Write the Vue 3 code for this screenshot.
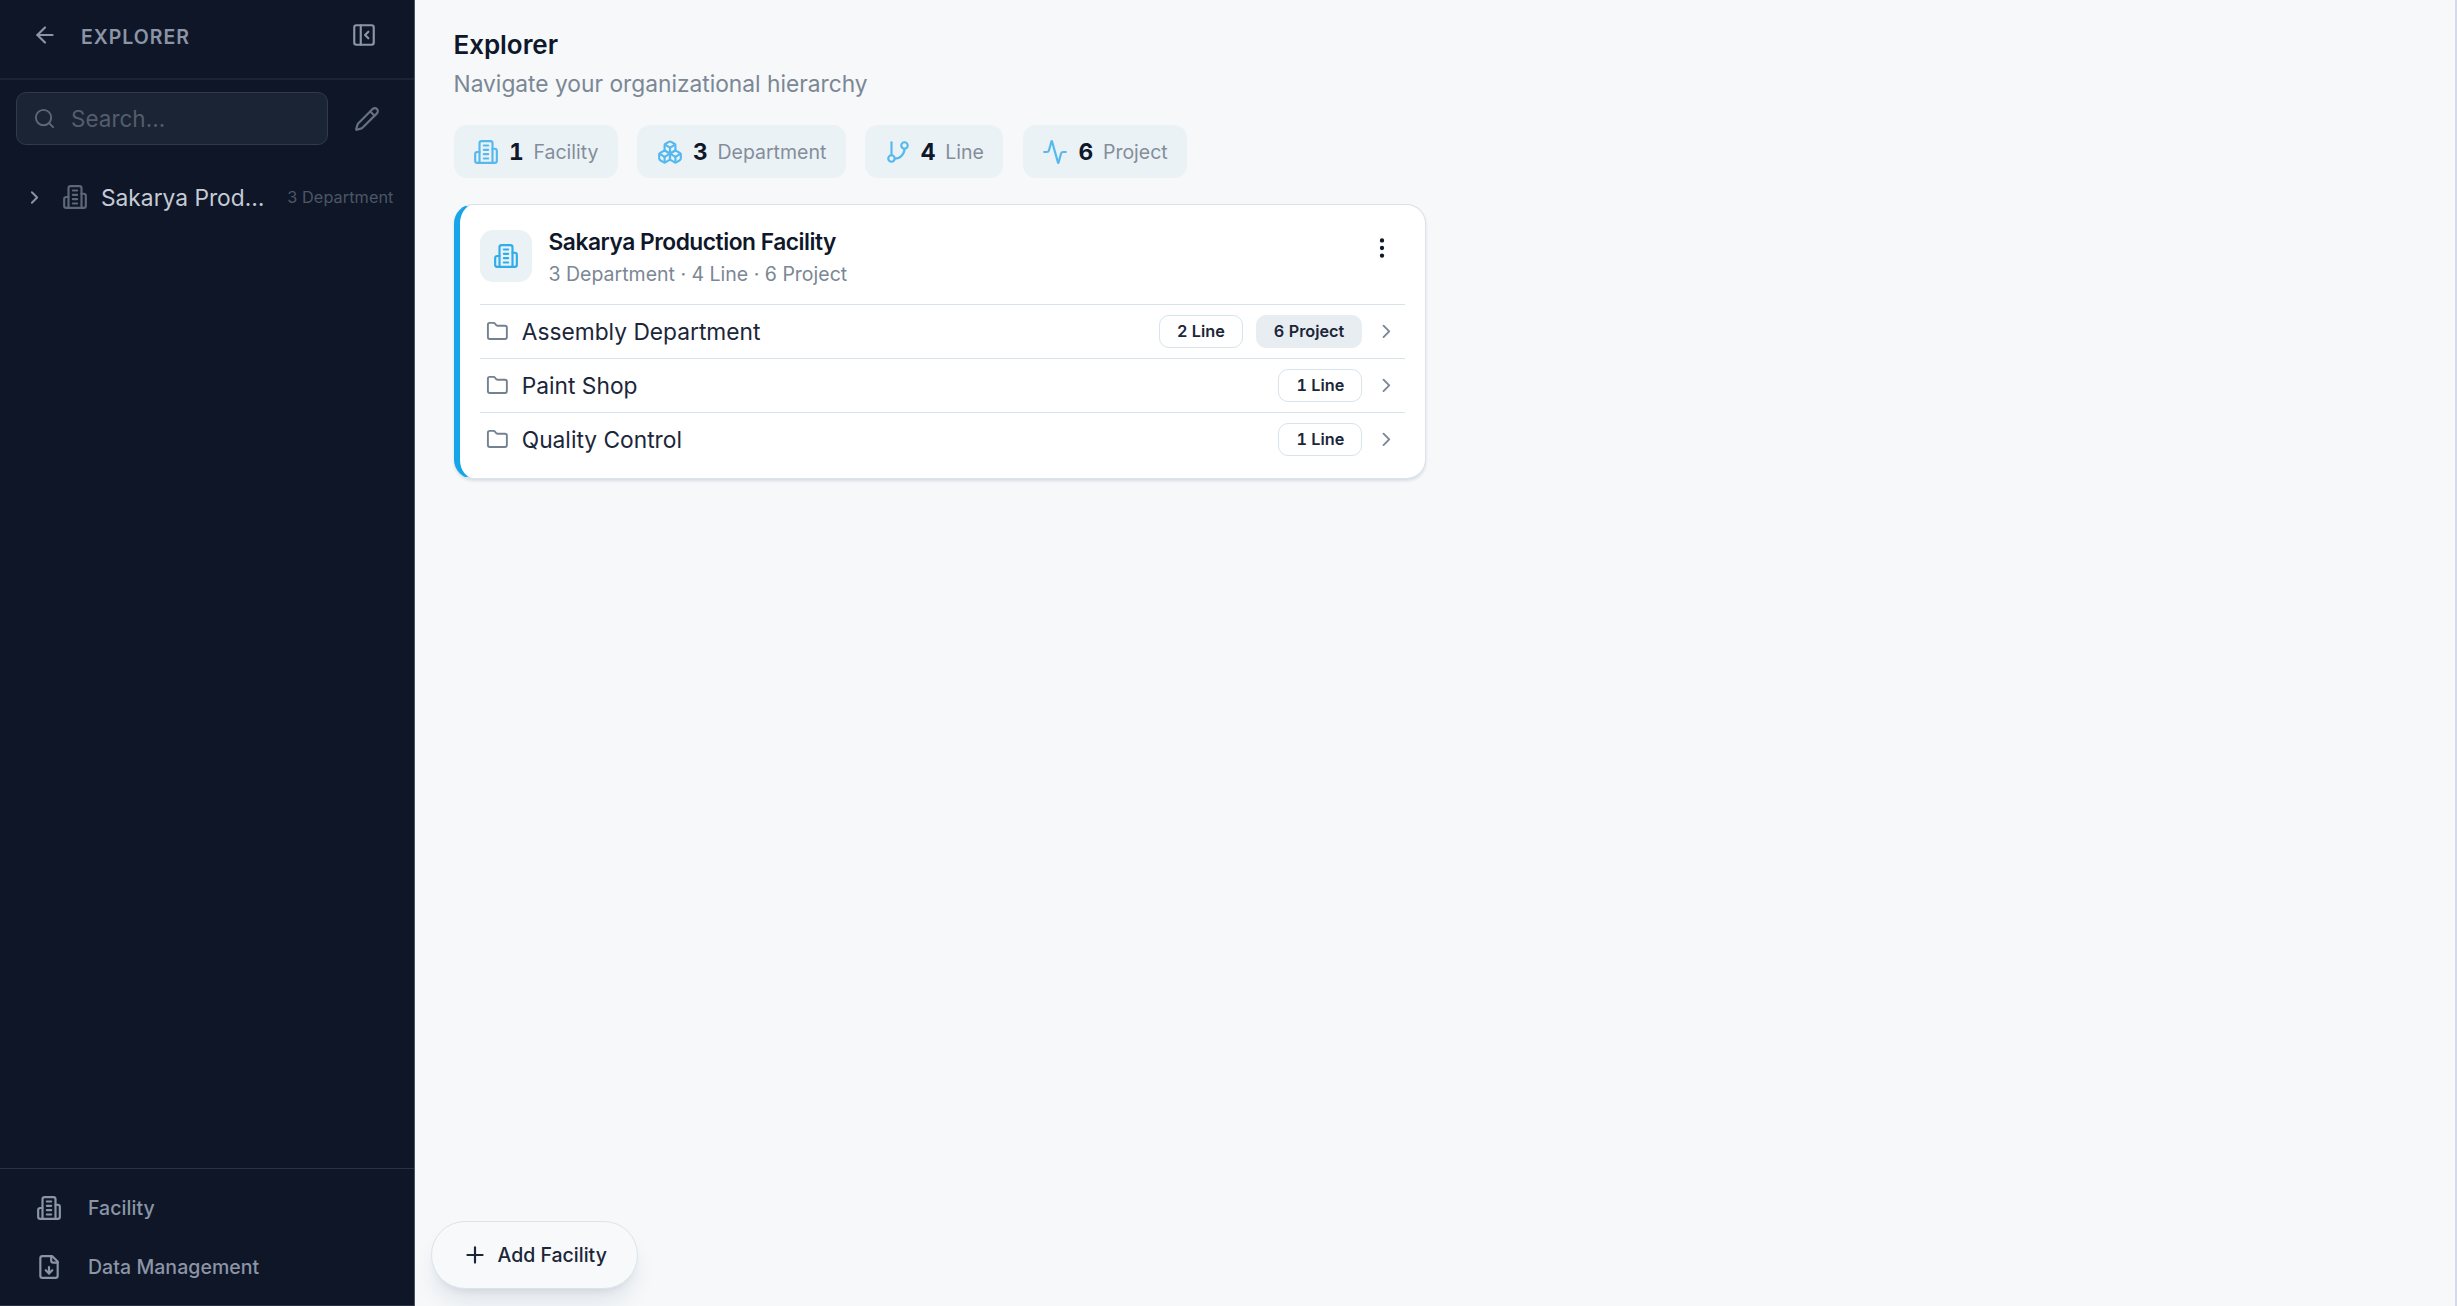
<template>
  <div class="layout">
    <aside class="sidebar">
      <header class="sidebar-header">
        <button class="icon-btn">
          <svg class="icon back-icon" viewBox="0 0 24 24"><path d="m12 19-7-7 7-7" /><path d="M19 12H5" /></svg>
        </button>
        <span class="sidebar-title">EXPLORER</span>
        <button class="icon-btn collapse-btn">
          <svg class="icon" viewBox="0 0 24 24"><rect width="18" height="18" x="3" y="3" rx="2" /><path d="M9 3v18" /><path d="m16 15-3-3 3-3" /></svg>
        </button>
      </header>

      <div class="search-row">
        <label class="search-box">
          <svg class="icon search-icon" viewBox="0 0 24 24"><circle cx="11" cy="11" r="8" /><path d="m21 21-4.3-4.3" /></svg>
          <input v-model="query" type="text" class="search-input" placeholder="Search..." />
        </label>
        <button class="icon-btn edit-btn">
          <svg class="icon" viewBox="0 0 24 24"><path d="M21.174 6.812a1 1 0 0 0-3.986-3.987L3.842 16.174a2 2 0 0 0-.5.83l-1.321 4.352a.5.5 0 0 0 .623.622l4.353-1.32a2 2 0 0 0 .83-.497z" /><path d="m15 5 4 4" /></svg>
        </button>
      </div>

      <div class="tree-row">
        <svg class="icon tree-chevron" viewBox="0 0 24 24"><path d="m9 18 6-6-6-6" /></svg>
        <svg class="icon tree-icon" viewBox="0 0 24 24"><path v-for="d in ICONS.building" :key="d" :d="d" /></svg>
        <span class="tree-name">{{ shorten('Sakarya Production Facility', 12) }}</span>
        <span class="tree-count">3 Department</span>
      </div>

      <nav class="sidebar-footer">
        <a v-for="link in links" :key="link.label" class="footer-link">
          <svg class="icon" viewBox="0 0 24 24"><path v-for="d in ICONS[link.icon]" :key="d" :d="d" /></svg>
          <span>{{ link.label }}</span>
        </a>
      </nav>
    </aside>

    <main class="content">
      <h1 class="page-title">Explorer</h1>
      <p class="page-subtitle">Navigate your organizational hierarchy</p>

      <div class="stats">
        <div v-for="stat in stats" :key="stat.label" class="stat">
          <svg class="icon stat-icon" viewBox="0 0 24 24"><path v-for="d in ICONS[stat.icon]" :key="d" :d="d" /></svg>
          <span class="stat-value">{{ stat.value }}</span>
          <span class="stat-label">{{ stat.label }}</span>
        </div>
      </div>

      <section class="card">
        <div class="card-header">
          <div class="card-icon">
            <svg class="icon" viewBox="0 0 24 24"><path v-for="d in ICONS.building" :key="d" :d="d" /></svg>
          </div>
          <div class="card-heading">
            <h2 class="card-title">Sakarya Production Facility</h2>
            <p class="card-meta">3 Department · 4 Line · 6 Project</p>
          </div>
          <button class="icon-btn menu-btn">
            <svg class="icon" viewBox="0 0 24 24"><circle cx="12" cy="12" r="1" /><circle cx="12" cy="5" r="1" /><circle cx="12" cy="19" r="1" /></svg>
          </button>
        </div>
        <div v-for="dep in departments" :key="dep.name" class="dep-row">
          <svg class="icon dep-icon" viewBox="0 0 24 24"><path d="M20 20a2 2 0 0 0 2-2V8a2 2 0 0 0-2-2h-7.9a2 2 0 0 1-1.69-.9L9.6 3.9A2 2 0 0 0 7.93 3H4a2 2 0 0 0-2 2v13a2 2 0 0 0 2 2Z" /></svg>
          <span class="dep-name">{{ dep.name }}</span>
          <span class="badge">{{ dep.lines }} Line</span>
          <span v-if="dep.projects" class="badge filled">{{ dep.projects }} Project</span>
          <svg class="icon dep-chevron" viewBox="0 0 24 24"><path d="m9 18 6-6-6-6" /></svg>
        </div>
      </section>

      <button class="add-btn">
        <svg class="icon" viewBox="0 0 24 24"><path d="M5 12h14" /><path d="M12 5v14" /></svg>
        <span>Add Facility</span>
      </button>
    </main>
  </div>
</template>

<script setup>
import { ref } from 'vue'

const query = ref('')

const ICONS = {
  building: [
    'M6 22V4a2 2 0 0 1 2-2h8a2 2 0 0 1 2 2v18Z',
    'M6 12H4a2 2 0 0 0-2 2v6a2 2 0 0 0 2 2h2',
    'M18 9h2a2 2 0 0 1 2 2v9a2 2 0 0 1-2 2h-2',
    'M10 6h4',
    'M10 10h4',
    'M10 14h4',
    'M10 18h4',
  ],
  boxes: [
    'M2.97 12.92A2 2 0 0 0 2 14.63v3.24a2 2 0 0 0 .97 1.71l3 1.8a2 2 0 0 0 2.06 0L12 19v-5.5l-5-3-4.03 2.42Z',
    'm7 16.5-4.74-2.85',
    'm7 16.5 5-3',
    'M7 16.5v5.17',
    'M12 13.5V19l3.97 2.38a2 2 0 0 0 2.06 0l3-1.8a2 2 0 0 0 .97-1.71v-3.24a2 2 0 0 0-.97-1.71L17 10.5l-5 3Z',
    'm17 16.5-5-3',
    'm17 16.5 4.74-2.85',
    'M17 16.5v5.17',
    'M7.97 4.42A2 2 0 0 0 7 6.13v4.37l5 3 5-3V6.13a2 2 0 0 0-.97-1.71l-3-1.8a2 2 0 0 0-2.06 0l-3 1.8Z',
    'M12 8 7.26 5.15',
    'm12 8 4.74-2.85',
    'M12 13.5V8',
  ],
  branch: [
    'M6 3v12',
    'M21 6a3 3 0 1 1-6 0a3 3 0 1 1 6 0',
    'M9 18a3 3 0 1 1-6 0a3 3 0 1 1 6 0',
    'M18 9a9 9 0 0 1-9 9',
  ],
  activity: [
    'M22 12h-2.48a2 2 0 0 0-1.93 1.46l-2.35 8.36a.25.25 0 0 1-.48 0L9.24 2.18a.25.25 0 0 0-.48 0l-2.35 8.36A2 2 0 0 1 4.49 12H2',
  ],
  fileDown: [
    'M15 2H6a2 2 0 0 0-2 2v16a2 2 0 0 0 2 2h12a2 2 0 0 0 2-2V7Z',
    'M14 2v4a2 2 0 0 0 2 2h4',
    'M12 18v-6',
    'm9 15 3 3 3-3',
  ],
}

const links = [
  { label: 'Facility', icon: 'building' },
  { label: 'Data Management', icon: 'fileDown' },
]

const stats = [
  { label: 'Facility', value: 1, icon: 'building' },
  { label: 'Department', value: 3, icon: 'boxes' },
  { label: 'Line', value: 4, icon: 'branch' },
  { label: 'Project', value: 6, icon: 'activity' },
]

const departments = [
  { name: 'Assembly Department', lines: 2, projects: 6 },
  { name: 'Paint Shop', lines: 1, projects: 0 },
  { name: 'Quality Control', lines: 1, projects: 0 },
]

function shorten(text, max) {
  return text.length > max ? text.slice(0, max) + '…' : text
}
</script>

<style>
body {
  margin: 0;
  background: #f6f8fa;
}
</style>

<style scoped>
.layout {
  display: flex;
  height: 100vh;
  box-sizing: border-box;
  border-right: 2px solid #d5dbe6;
  font-family: Inter, sans-serif;
  color: #0f172a;
  overflow: hidden;
}

.layout *,
.layout *::before {
  box-sizing: border-box;
}

.icon {
  display: block;
  width: 26px;
  height: 26px;
  flex-shrink: 0;
  fill: none;
  stroke: currentColor;
  stroke-width: 2;
  stroke-linecap: round;
  stroke-linejoin: round;
}

.icon-btn {
  padding: 0;
  border: none;
  background: transparent;
  color: inherit;
  cursor: pointer;
}

/* Sidebar */
.sidebar {
  display: flex;
  flex-direction: column;
  width: 414.5px;
  flex-shrink: 0;
  background: #0e1628;
  color: #8b95a5;
  border-right: 1px solid #4b5567;
}

.sidebar-header {
  display: flex;
  align-items: center;
  height: 80px;
  padding: 0 37px 8px 32px;
  border-bottom: 2px solid #1b2434;
}

.sidebar-title {
  margin: 3px 0 0 23px;
  font-size: 19.5px;
  font-weight: 600;
  letter-spacing: 0.98px;
}

.collapse-btn {
  margin-left: auto;
}

.search-row {
  display: flex;
  align-items: center;
  padding: 12px 34px 0 16px;
}

.search-box {
  display: flex;
  align-items: center;
  gap: 15px;
  width: 312px;
  height: 53px;
  padding: 0 16px;
  border: 1px solid #303a4a;
  border-radius: 10px;
  background: #1b2434;
}

.search-icon {
  width: 23px;
  height: 23px;
  color: #5d6777;
}

.search-input {
  flex: 1;
  min-width: 0;
  padding: 0;
  border: none;
  outline: none;
  background: transparent;
  color: #d1d5db;
  font-family: inherit;
  font-size: 22.5px;
}

.search-input::placeholder {
  color: #535d6d;
}

.edit-btn {
  margin-left: auto;
  color: #667080;
}

.tree-row {
  display: flex;
  align-items: center;
  height: 52px;
  margin-top: 26px;
  padding: 0 20px 0 24px;
}

.tree-chevron {
  width: 21px;
  height: 21px;
  stroke-width: 2.2;
}

.tree-icon {
  margin-left: 17px;
  color: #5d6777;
}

.tree-name {
  margin-left: 13px;
  white-space: nowrap;
  color: #c5cbd4;
  font-size: 22.75px;
}

.tree-count {
  margin-left: auto;
  white-space: nowrap;
  color: #4c5666;
  font-size: 16.25px;
  letter-spacing: 0.07px;
}

.sidebar-footer {
  margin-top: auto;
  padding: 10px 0 9px;
  border-top: 1px solid #283242;
  border-bottom: 1px solid #283242;
}

.footer-link {
  display: flex;
  align-items: center;
  gap: 26px;
  height: 58.5px;
  padding-left: 36px;
  font-size: 19.5px;
  font-weight: 500;
  letter-spacing: 0.05px;
}

/* Content */
.content {
  position: relative;
  flex: 1;
  padding: 27px 39px;
  background: #f6f8fa;
}

.page-title {
  margin: 0;
  font-size: 26px;
  font-weight: 600;
  line-height: 36px;
  letter-spacing: -0.05px;
}

.page-subtitle {
  margin: 5px 0 0;
  color: #7b8794;
  font-size: 22.75px;
  line-height: 32px;
}

.stats {
  display: flex;
  gap: 19.5px;
  margin-top: 25px;
}

.stat {
  display: flex;
  align-items: center;
  height: 53px;
  padding: 0 19.5px;
  border-radius: 13px;
  background: #ebf2f6;
}

.stat-icon {
  color: #56b9ee;
}

.stat-value {
  margin-left: 10px;
  font-size: 22.75px;
  font-weight: 700;
  font-variant-numeric: tabular-nums;
}

.stat-label {
  margin-left: 9.75px;
  color: #848d9a;
  font-size: 19.5px;
}

.card {
  width: 972.5px;
  height: 275px;
  margin-top: 26px;
  padding: 25px 20px 0;
  border: 1.6px solid #d9e3ea;
  border-left: 6.5px solid #16a5e9;
  border-radius: 19.5px;
  background: #fff;
  box-shadow: 0 2px 3px rgba(15, 42, 72, 0.12);
}

.card-header {
  display: flex;
  height: 74px;
}

.card-icon {
  display: flex;
  align-items: center;
  justify-content: center;
  width: 52px;
  height: 52px;
  border-radius: 13px;
  background: #ebf2f6;
  color: #2eaceb;
}

.card-heading {
  flex: 1;
  margin-left: 17px;
}

.card-title {
  margin: -4px 0 0;
  font-size: 22.75px;
  font-weight: 600;
  line-height: 32px;
  letter-spacing: -0.47px;
}

.card-meta {
  margin: 2px 0 0;
  color: #7b8794;
  font-size: 19.5px;
  line-height: 28px;
}

.menu-btn {
  height: 36px;
  margin-right: 10px;
}

.dep-row {
  display: flex;
  align-items: center;
  height: 54px;
  padding: 0 7px 0 6.5px;
  border-top: 1.5px solid #d7e2e9;
}

.dep-icon {
  width: 22.75px;
  height: 22.75px;
  color: #748190;
}

.dep-name {
  flex: 1;
  margin-left: 13px;
  color: #1b2639;
  font-size: 22.75px;
}

.badge {
  height: 33px;
  margin-left: 13px;
  padding: 0 17px;
  border: 1.5px solid #d9e3ea;
  border-radius: 10px;
  color: #1b2639;
  font-size: 16.25px;
  font-weight: 600;
  line-height: 31px;
  font-variant-numeric: tabular-nums;
}

.badge.filled {
  border-color: #e8edf1;
  background: #e8edf1;
}

.dep-chevron {
  width: 22.75px;
  height: 22.75px;
  margin-left: 13px;
  color: #7b8794;
}

/* Floating action over the content area */
.add-btn {
  position: absolute;
  left: 16px;
  bottom: 17px;
  display: flex;
  align-items: center;
  gap: 10px;
  height: 68px;
  padding: 0 30px;
  border: 1.6px solid #d9e5ec;
  border-radius: 34px;
  background: #f7f9fb;
  color: #1b2639;
  font-family: inherit;
  font-size: 19.5px;
  font-weight: 500;
  box-shadow: 0 16px 24px -5px rgba(15, 42, 72, 0.1), 0 6px 10px -6px rgba(15, 42, 72, 0.12);
  cursor: pointer;
}
</style>
